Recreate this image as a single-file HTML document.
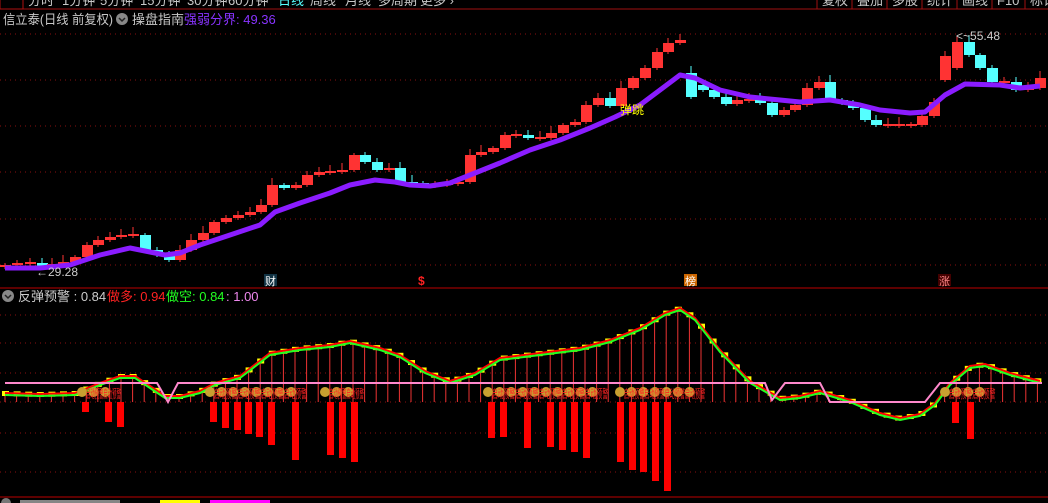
<!DOCTYPE html>
<html><head><meta charset="utf-8"><style>
html,body{margin:0;padding:0;background:#000;width:1048px;height:503px;overflow:hidden;font-family:"Liberation Sans","Noto Sans CJK SC",sans-serif}
svg{display:block}
</style></head><body>
<svg id="s" width="1048" height="503" xmlns="http://www.w3.org/2000/svg" font-family="Liberation Sans, Noto Sans CJK SC, sans-serif">
<rect width="1048" height="503" fill="#000"/>
<g id="grid"></g>
<line x1="0" y1="9" x2="1048" y2="9" stroke="#a01010"/>
<rect x="0" y="-5" width="23" height="14" fill="none" stroke="#b01010"/>
<g font-size="13" fill="#c8c8c8">
<text x="28" y="5">分时</text><text x="62" y="5">1分钟</text><text x="100" y="5">5分钟</text><text x="140" y="5">15分钟</text><text x="187" y="5">30分钟</text><text x="228" y="5">60分钟</text>
<text x="278" y="5" fill="#5ff">日线</text>
<text x="310" y="5">周线</text><text x="345" y="5">月线</text><text x="378" y="5">多周期</text><text x="420" y="5">更多 ›</text>
</g>
<g stroke="#a01010"><line x1="817" y1="0" x2="817" y2="9"/><line x1="852" y1="0" x2="852" y2="9"/><line x1="887" y1="0" x2="887" y2="9"/><line x1="922" y1="0" x2="922" y2="9"/><line x1="957" y1="0" x2="957" y2="9"/><line x1="992" y1="0" x2="992" y2="9"/><line x1="1025" y1="0" x2="1025" y2="9"/></g>
<g font-size="13" fill="#c8c8c8"><text x="822" y="5">复权</text><text x="857" y="5">叠加</text><text x="892" y="5">多股</text><text x="927" y="5">统计</text><text x="962" y="5">画线</text><text x="997" y="5">F10</text><text x="1030" y="5">标记</text></g>
<text x="3" y="24" font-size="13" fill="#c8c8c8" textLength="110" lengthAdjust="spacingAndGlyphs">信立泰(日线 前复权)</text>
<circle cx="122" cy="19" r="6" fill="#888"/><path d="M119 18l3 3 3-3" stroke="#222" stroke-width="1.5" fill="none"/>
<text x="132" y="24" font-size="13" fill="#c8c8c8">操盘指南</text>
<text x="184" y="24" font-size="13" fill="#8833ff">强弱分界: 49.36</text>
<g id="cand"></g>
<polyline id="ma" fill="none" stroke="#8a1cff" stroke-width="5" stroke-linejoin="round"/>
<text x="36" y="276" font-size="12" fill="#ccc">←29.28</text>
<text x="956" y="40" font-size="12" fill="#ccc">&lt;~55.48</text>
<text x="620" y="114" font-size="12" fill="#ff0">弹跳</text>
<rect x="264" y="274" width="13" height="12" fill="#134"/><text x="265" y="285" font-size="11" fill="#fff">财</text>
<text x="418" y="285" font-size="12" fill="#f22" font-weight="bold">$</text>
<rect x="684" y="274" width="13" height="12" fill="#c60"/><text x="685" y="285" font-size="11" fill="#fff">榜</text>
<rect x="938" y="274" width="13" height="12" fill="#400"/><text x="939" y="285" font-size="11" fill="#f88">涨</text>
<line x1="0" y1="288" x2="1048" y2="288" stroke="#b00"/>
<circle cx="8" cy="296" r="6" fill="#888"/><path d="M5 295l3 3 3-3" stroke="#222" stroke-width="1.5" fill="none"/>
<g font-size="13"><text x="18" y="301" fill="#ccc">反弹预警 : 0.84</text><text x="107" y="301" fill="#f22">做多: 0.94</text><text x="166" y="301" fill="#2f2">做空: 0.84</text><text x="226" y="301" fill="#e8e">: 1.00</text></g>
<g id="low"></g>
<line x1="0" y1="497" x2="1048" y2="497" stroke="#b00"/>
<circle cx="6" cy="503" r="5" fill="#777"/>
<g fill="#ddd"><rect x="20" y="500" width="100" height="3" opacity=".6"/></g><rect x="160" y="500" width="40" height="3" fill="#ff0"/><rect x="210" y="500" width="60" height="3" fill="#f0f"/>
</svg>
<script>
var NS="http://www.w3.org/2000/svg";
function el(p,t,a){var e=document.createElementNS(NS,t);for(var k in a)e.setAttribute(k,a[k]);p.appendChild(e);return e}
var g=document.getElementById('grid');
[34,80,126,172,219,265,315,343,373,402,433,472].forEach(function(y){el(g,'line',{x1:0,x2:1048,y1:y,y2:y,stroke:'#8a1010','stroke-dasharray':'1 4'})});
var P=[[5,265],[17,264],[30,263],[42,266],[52,265],[63,262],[75,257],[87,245],[98,240],[110,237],[121,236],[133,235],[145,250],[157,255],[169,260],[180,250],[191,240],[203,233],[214,222],[226,218],[238,215],[250,212],[261,205],[272,185],[284,188],[296,185],[307,175],[319,172],[330,172],[342,170],[354,155],[365,162],[377,170],[389,168],[400,182],[412,183],[423,185],[435,185],[447,184],[458,182],[470,155],[481,152],[493,148],[505,135],[516,135],[528,138],[540,138],[551,133],[563,125],[575,122],[586,105],[598,98],[610,106],[621,88],[633,78],[645,68],[657,52],[668,43],[680,40],[691,85],[703,90],[714,97],[726,104],[737,100],[749,100],[760,103],[772,115],[784,110],[795,105],[807,88],[819,82],[830,100],[842,103],[853,108],[865,120],[876,125],[888,125],[899,125],[911,125],[922,116],[934,102],[945,68],[957,42],[969,55],[980,68],[992,82],[1004,82],[1016,90],[1028,88],[1040,78]];
var c=document.getElementById('cand');
for(var i=0;i<P.length;i++){var x=P[i][0],y=P[i][1],py=i?P[i-1][1]:y+2;var up=y<=py;var col=up?'#ff3333':'#55ffff';
 var t=Math.min(py,y),b=Math.max(py,y);if(Math.abs(b-t)>30){t=y-12;b=y+12}if(b-t<2){t=y-1;b=y+1}
 var hw=(i*7)%6+2;el(c,'line',{x1:x,x2:x,y1:t-hw,y2:b+((i*5)%5)+2,stroke:col});
 el(c,'rect',{x:x-5,y:t,width:11,height:Math.max(b-t,1.5),fill:col});}
var ma=[[5,268],[40,268],[70,265],[100,255],[130,248],[150,252],[165,255],[180,253],[200,245],[230,235],[260,225],[275,212],[300,203],[330,193],[350,185],[375,180],[395,182],[410,185],[430,186],[450,183],[470,175],[500,163],[530,150],[560,140],[590,128],[615,117],[640,105],[660,90],[680,75],[695,78],[720,90],[750,97],[780,100],[800,102],[830,100],[860,105],[880,110],[910,113],[925,112],[945,95],[965,84],[1000,85],[1020,88],[1040,86]];
document.getElementById('ma').setAttribute('points',ma.map(function(p){return p.join(',')}).join(' '));
var L=document.getElementById('low');
var cv=[[5,395],[40,396],[75,395],[100,385],[120,378],[135,378],[150,388],[165,398],[180,398],[200,393],[215,385],[240,378],[270,355],[300,350],[330,347],[350,343],[380,350],[400,357],[425,373],[450,383],[475,375],[500,360],[540,355],[580,350],[610,342],[640,330],[665,315],[680,310],[695,320],[720,352],[750,383],[780,400],[800,398],[820,393],[850,402],[880,415],[900,420],[920,416],[935,405],[950,385],[970,368],[985,366],[1010,375],[1040,383]];
function yat(x){for(var i=1;i<cv.length;i++)if(x<=cv[i][0]){var a=cv[i-1],b=cv[i];return a[1]+(b[1]-a[1])*(x-a[0])/(b[0]-a[0])}return 383}
for(var x=5;x<1042;x+=11.6){var y=yat(x);if(y<400)el(L,'line',{x1:x,x2:x,y1:y,y2:402,stroke:'#e33'});el(L,'rect',{x:x-3,y:y-4,width:7,height:5,fill:'#ff0'});}
el(L,'polyline',{points:cv.map(function(p){return p[0]+','+(p[1]-2)}).join(' '),fill:'none',stroke:'#f00',"stroke-width":2});
el(L,'polyline',{points:cv.map(function(p){return p[0]+','+p[1]}).join(' '),fill:'none',stroke:'#2f2',"stroke-width":2});
[[85,412],[108,422],[120,427],[213,422],[225,428],[237,430],[248,434],[259,437],[271,445],[295,460],[330,455],[342,458],[354,462],[491,438],[503,437],[527,448],[550,447],[562,450],[574,452],[586,458],[620,462],[632,470],[643,472],[655,481],[667,491],[955,423],[970,439]].forEach(function(b){el(L,'rect',{x:b[0]-3,y:402,width:7,height:b[1]-402,fill:'#f00'})});
[[82,3],[210,8],[325,3],[488,10],[620,7],[945,4]].forEach(function(s){for(var k=0;k<s[1];k++){var x=s[0]+k*11.6;el(L,'circle',{cx:x,cy:392,r:5,fill:'#c9a030'});}
 var t=el(L,'text',{x:s[0]+4,y:398,"font-size":12,fill:'#f22'});t.textContent='启动预警'.repeat(Math.ceil(s[1]/2));t.setAttribute('textLength',s[1]*11.6);t.setAttribute('lengthAdjust','spacingAndGlyphs');});
el(L,'polyline',{points:'5,383 157,383 168,402 178,383 765,383 772,400 785,383 820,383 830,402 925,402 940,383 1042,383',fill:'none',stroke:'#f8c',"stroke-width":2});
</script>
</body></html>
